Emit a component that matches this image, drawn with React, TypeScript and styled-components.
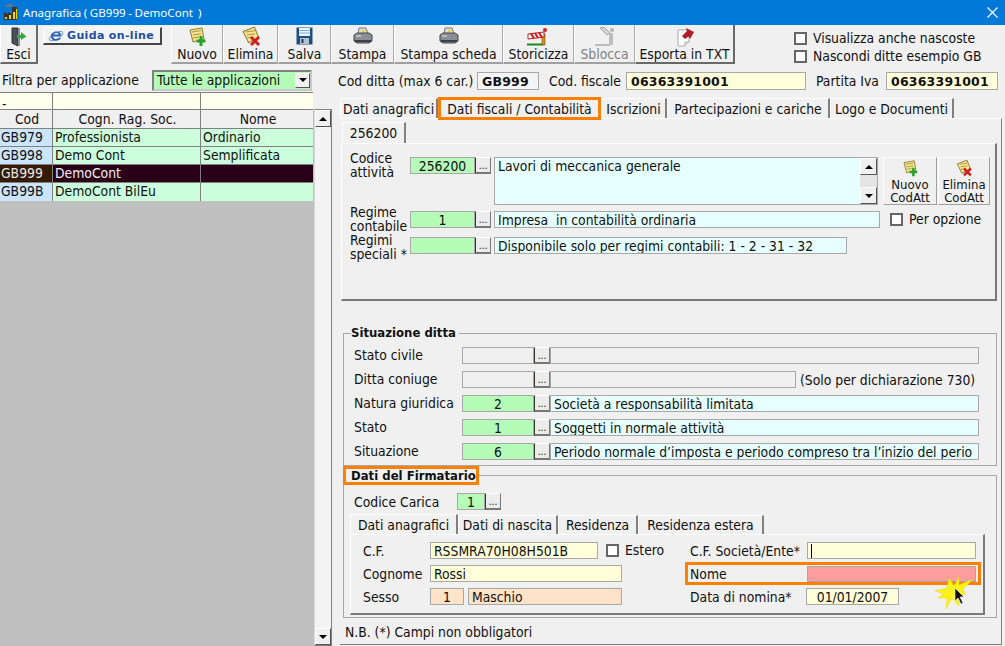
import { FC, ReactNode } from "react";
import styled, { createGlobalStyle } from "styled-components";

const Global = createGlobalStyle`
  html, body { margin: 0; padding: 0; background: #f0f0f0; }
  body { font-family: "DejaVu Sans Condensed", "DejaVu Sans", sans-serif; font-size: 13.8px; color: #111; }
  * { box-sizing: border-box; }
`;

const Page = styled.div`
  width: 1005px;
  height: 646px;
  display: flex;
  flex-direction: column;
  overflow: hidden;
  position: relative;
  background: #f0f0f0;
`;

const TitleBar = styled.div`
  height: 25px;
  flex: none;
  background: #0078d7;
  color: #fff;
  display: flex;
  align-items: center;
  padding: 0 7px 0 3px;
  gap: 4px;
  white-space: pre;
  font-family: "Noto Sans", sans-serif;
  font-size: 11.6px;
  word-spacing: -0.5px;
`;
const TitleText = styled.span`
  flex: 1;
`;

const TopBar = styled.div`
  height: 40px;
  flex: none;
  display: flex;
  align-items: flex-start;
`;

const ToolButton = styled.div<{ $w: number; $off?: boolean; $raised?: boolean }>`
  width: ${(p) => p.$w}px;
  height: 39px;
  flex: none;
  display: flex;
  flex-direction: column;
  align-items: center;
  justify-content: space-between;
  padding-top: 2px;
  color: ${(p) => (p.$off ? "#808080" : "#111")};
  background: #f0f0f0;
  border-right: 1px solid #a8a8a8;
  border-bottom: 2px solid #a0a0a0;
  border-left: 1px solid #fff;
  ${(p) => p.$raised && "border-right: 2px solid #696969; border-bottom: 2px solid #696969;"}
  line-height: 15px;
  white-space: nowrap;
`;

const HelpButton = styled.div`
  width: 119px;
  height: 18px;
  margin: 2px 9px 0 5px;
  flex: none;
  display: flex;
  align-items: center;
  gap: 3px;
  padding-left: 4px;
  background: #f4f4f4;
  border: 1px solid #fff;
  border-right: 2px solid #444;
  border-bottom: 2px solid #444;
  color: #1f4e9c;
  font-family: "DejaVu Sans", sans-serif;
  font-size: 11px;
  font-weight: 700;
  letter-spacing: 0.35px;
  white-space: nowrap;
`;

const TopChecks = styled.div`
  margin-left: 59px;
  padding-top: 7px;
  display: flex;
  flex-direction: column;
  gap: 5px;
`;

const CheckRow = styled.label<{ $ml?: number; $w?: number }>`
  display: flex;
  align-items: center;
  gap: 6px;
  line-height: 13px;
  white-space: nowrap;
  margin-left: ${(p) => p.$ml ?? 0}px;
  ${(p) => p.$w && `width: ${p.$w}px; flex: none;`}
`;

const CheckBox = styled.span`
  width: 13px;
  height: 13px;
  flex: none;
  display: block;
  background: #fff;
  border: 2px solid #666;
`;

const Main = styled.div`
  flex: 1;
  min-height: 0;
  display: flex;
`;

const LeftCol = styled.div`
  width: 333px;
  flex: none;
  display: flex;
  flex-direction: column;
`;

const FilterRow = styled.div`
  height: 27px;
  flex: none;
  display: flex;
  align-items: center;
  padding: 3px 0 0 2px;
  white-space: nowrap;
`;

const FilterLabel = styled.span`
  width: 150px;
`;

const Select = styled.div`
  width: 160px;
  height: 21px;
  display: flex;
  align-items: center;
  justify-content: space-between;
  padding-left: 3px;
  background: #b5fcb9;
  border: 2px solid #808080;
  border-bottom-color: #c8c8c8;
  border-right-color: #c8c8c8;
`;

const ArrowBox = styled.span<{ $w?: number; $h?: number }>`
  width: ${(p) => p.$w ?? 15}px;
  height: ${(p) => p.$h ?? 15}px;
  flex: none;
  display: flex;
  align-items: center;
  justify-content: center;
  background: #f0f0f0;
  border: 1px solid #fff;
  border-right-color: #555;
  border-bottom-color: #555;
`;

const Tri = styled.span<{ $up?: boolean }>`
  width: 0;
  height: 0;
  border-left: 4px solid transparent;
  border-right: 4px solid transparent;
  border-${(p) => (p.$up ? "bottom" : "top")}: 4px solid #000;
`;

const GridRow = styled.div<{ $h: number }>`
  width: 313px;
  height: ${(p) => p.$h}px;
  flex: none;
  display: grid;
  grid-template-columns: 52px 147px 112px;
  gap: 1px;
  background: #808080;
  padding: 1px 0 0;
  border-right: 1px solid #808080;
`;

const Cell = styled.div<{ $bg: string; $color?: string; $head?: boolean; $pad?: number }>`
  background: ${(p) => p.$bg};
  color: ${(p) => p.$color ?? "#111"};
  display: flex;
  align-items: center;
  justify-content: ${(p) => (p.$head ? "center" : "flex-start")};
  padding-left: ${(p) => p.$pad ?? 2}px;
  padding-bottom: ${(p) => (p.$head ? 0 : 2)}px;
  white-space: nowrap;
  overflow: hidden;
`;

const DashCell = styled(Cell)`
  align-items: flex-end;
  padding-bottom: 0;
  line-height: 10px;
  overflow: visible;
`;

const GridBody = styled.div`
  flex: 1;
  min-height: 0;
  display: flex;
`;

const GridArea = styled.div`
  width: 314px;
  flex: none;
  background: #c0c0c0;
`;

const Scrollbar = styled.div`
  width: 18px;
  flex: none;
  display: flex;
  flex-direction: column;
  justify-content: space-between;
  background: #f4f4f4;
  border: 1px solid #808080;
  border-left-color: #d8d8d8;
`;

const RightCol = styled.div`
  flex: 1;
  min-width: 0;
  display: flex;
  flex-direction: column;
`;

const InfoRow = styled.div`
  height: 18px;
  margin-top: 7px;
  padding-left: 5px;
  display: flex;
  align-items: center;
  white-space: nowrap;
`;

const InfoLabel = styled.span<{ $w: number; $pl?: number }>`
  width: ${(p) => p.$w}px;
  padding-left: ${(p) => p.$pl ?? 0}px;
  flex: none;
`;

const InfoValue = styled.span<{ $w: number; $bg: string }>`
  width: ${(p) => p.$w}px;
  height: 18px;
  flex: none;
  display: flex;
  align-items: center;
  padding-left: 4px;
  background: ${(p) => p.$bg};
  border: 1px solid #a8a8a8;
  font-family: "DejaVu Sans", sans-serif;
  font-size: 12.5px;
  font-weight: 700;
  letter-spacing: 0.2px;
`;

const TabStrip = styled.div<{ $ml: number; $mt: number; $h: number }>`
  display: flex;
  margin: ${(p) => p.$mt}px 0 0 ${(p) => p.$ml}px;
  height: ${(p) => p.$h}px;
  flex: none;
  align-items: flex-end;
`;

const Tab = styled.div<{ $w: number; $active?: boolean }>`
  width: ${(p) => p.$w}px;
  height: ${(p) => (p.$active ? "100%" : "calc(100% - 1px)")};
  flex: none;
  display: flex;
  align-items: center;
  justify-content: center;
  white-space: nowrap;
  background: #f0f0f0;
  border-top: 1px solid #fff;
  border-left: 1px solid #fff;
  border-right: 2px solid #808080;
`;

const MarkedTab = styled.div<{ $w: number }>`
  width: ${(p) => p.$w}px;
  height: 23px;
  margin-bottom: -2px;
  flex: none;
  position: relative;
  z-index: 1;
  display: flex;
  align-items: center;
  justify-content: center;
  white-space: nowrap;
  background: #f0f0f0;
  border: 3px solid #ff8000;
`;

const OuterPanel = styled.div`
  flex: 1;
  min-height: 0;
  margin: 0 3px 1px 7px;
  padding: 3px 4px 0 1px;
  border-top: 1px solid #fff;
  border-right: 1px solid #808080;
  border-bottom: 1px solid #808080;
  display: flex;
  flex-direction: column;
`;

const TabPanel = styled.div<{ $h: number }>`
  height: ${(p) => p.$h}px;
  flex: none;
  border-top: 1px solid #fff;
  border-left: 1px solid #fff;
  border-right: 2px solid #787878;
  border-bottom: 2px solid #787878;
  display: flex;
  flex-direction: column;
`;

const ActivityPanel = styled(TabPanel)`
  padding: 13px 0 0 8px;
  gap: 6px;
`;

const FormRow = styled.div<{ $h: number; $mt?: number }>`
  display: flex;
  align-items: center;
  height: ${(p) => p.$h}px;
  margin-top: ${(p) => p.$mt ?? 0}px;
  flex: none;
`;

const TopRow = styled(FormRow)`
  align-items: flex-start;
`;

const Label = styled.span<{ $w: number; $raise?: number; $ml?: number }>`
  width: ${(p) => p.$w}px;
  flex: none;
  line-height: 14px;
  margin-top: ${(p) => -(p.$raise ?? 0)}px;
  margin-left: ${(p) => p.$ml ?? 0}px;
  white-space: nowrap;
`;

const Note = styled.span`
  margin-left: 4px;
  white-space: nowrap;
`;

const Box = styled.div<{ $w: number; $bg?: string; $center?: boolean; $h?: number; $ml?: number }>`
  width: ${(p) => p.$w}px;
  height: ${(p) => p.$h ?? 17}px;
  flex: none;
  margin-left: ${(p) => p.$ml ?? 0}px;
  display: flex;
  align-items: center;
  justify-content: ${(p) => (p.$center ? "center" : "flex-start")};
  padding: 0 3px;
  background: ${(p) => p.$bg ?? "#f0f0f0"};
  border: 1px solid #a8a8a8;
  white-space: pre;
  overflow: hidden;
`;

const Caret = styled.span`
  width: 1px;
  height: 14px;
  background: #000;
`;

const Dots = styled.div`
  width: 16px;
  height: 17px;
  flex: none;
  display: flex;
  align-items: flex-end;
  justify-content: center;
  line-height: 12px;
  font-size: 10px;
  background: #ececec;
  border: 1px solid #fff;
  border-left: 1px solid #333;
  border-right-color: #777;
  border-bottom: 2px solid #777;
`;

const MemoBox = styled.div`
  width: 384px;
  height: 48px;
  flex: none;
  margin-left: 3px;
  display: flex;
  justify-content: space-between;
  padding-left: 3px;
  background: #e6ffff;
  border: 1px solid #a8a8a8;
`;

const MemoBar = styled.div`
  width: 17px;
  flex: none;
  display: flex;
  flex-direction: column;
  justify-content: space-between;
  background: #e4e4e4;
`;

const MiniButton = styled.div<{ $ml: number; $w: number }>`
  width: ${(p) => p.$w}px;
  height: 48px;
  margin-left: ${(p) => p.$ml}px;
  flex: none;
  display: flex;
  flex-direction: column;
  align-items: center;
  text-align: center;
  font-size: 13px;
  line-height: 13px;
  padding-top: 2px;
  border: 1px solid #fff;
  border-right-color: #a0a0a0;
  border-bottom-color: #a0a0a0;
  white-space: pre-line;
  svg { margin-bottom: 1px; }
`;

const GroupBox = styled.fieldset<{ $mt: number; $h: number }>`
  margin: ${(p) => p.$mt}px 0 0 2px;
  width: 654px;
  height: ${(p) => p.$h}px;
  flex: none;
  padding: 0 0 0 10px;
  border: 1px solid #a8a8a8;
  min-inline-size: 0;
`;

const GroupTitle = styled.legend<{ $mark?: boolean }>`
  margin-left: ${(p) => (p.$mark ? "-11px" : "-3px")};
  padding: ${(p) => (p.$mark ? "0 0 0 5px" : "0 3px 0 0")};
  font-size: 13px;
  font-weight: 700;
  line-height: ${(p) => (p.$mark ? "13px" : "16px")};
  ${(p) => p.$mark && "border: 3px solid #ff8000;"}
`;

const Stack = styled.div<{ $gap: number; $pt: number }>`
  display: flex;
  flex-direction: column;
  gap: ${(p) => p.$gap}px;
  padding-top: ${(p) => p.$pt}px;
`;

const SignerPanel = styled(TabPanel)`
  width: 635px;
  margin-left: -4px;
  padding: 7px 0 0 12px;
  gap: 6px;
`;

const Marked = styled.div`
  width: 296px;
  height: 23px;
  flex: none;
  margin: -3px 0 -3px 63px;
  display: flex;
  align-items: center;
  padding-left: 2px;
  border: 3px solid #ff8000;
`;

const Footnote = styled.div`
  margin: 6px 0 0 4px;
  line-height: 16px;
`;

const Overlay = styled.div`
  position: absolute;
  left: 935px;
  top: 576px;
  width: 40px;
  height: 36px;
`;

const DocIcon: FC<{ kind: "add" | "del"; s?: number }> = ({ kind, s = 20 }) => (
  <svg width={s} height={s} viewBox="0 0 20 20">
    <path d="M3 3 L15 1 L17 12 L6 15 Z" fill="#f6e590" stroke="#8a7a30" strokeWidth="1" transform={kind === "del" ? "rotate(-12 10 8)" : undefined} />
    <path d="M5 5 L14 3.6 M6 8 L14 6.8 M6 11 L12 10" stroke="#a89440" strokeWidth="1" />
    {kind === "add" ? (
      <path d="M14 9 V19 M9.5 14 H18.5" stroke="#2aa02a" strokeWidth="3" />
    ) : (
      <path d="M10 10 L18 18 M18 10 L10 18" stroke="#d02020" strokeWidth="3" />
    )}
  </svg>
);

const PrinterIcon = () => (
  <svg width="20" height="18" viewBox="0 0 20 18">
    <path d="M6 1 H13 L15 7 H5 Z" fill="#ddd" stroke="#777" />
    <path d="M9 3 h3 v2 h-3z" fill="#e8d050" />
    <path d="M1 8 L4 6 H16 L19 8 V14 L16 16 H4 L1 14 Z" fill="#8a8f96" stroke="#444" />
    <path d="M2 13 H18 V15 H2Z" fill="#3c4046" />
    <path d="M3 9 H8" stroke="#e4e4e4" />
  </svg>
);

const FloppyIcon = () => (
  <svg width="17" height="18" viewBox="0 0 17 18">
    <rect x="0.5" y="0.5" width="16" height="17" fill="#1d4f7e" />
    <rect x="3" y="1" width="11" height="8" fill="#e8f2fa" />
    <path d="M3 3.5 H14 M3 6 H14" stroke="#7fb2d8" />
    <rect x="4" y="11" width="9" height="6" fill="#b8c2cc" />
    <rect x="5.5" y="12" width="2" height="4" fill="#1d3a58" />
  </svg>
);

const ExitIcon = () => (
  <svg width="16" height="20" viewBox="0 0 16 20">
    <path d="M1 1 H7 V19 L1 16 Z" fill="#4a5058" stroke="#2c3036" />
    <path d="M7 1 H9 V19 H7Z" fill="#8a9098" />
    <path d="M6 8 H10 V5 L15.5 9.5 L10 13 V11 H6 Z" fill="#35a83a" />
  </svg>
);

const IeIcon = () => (
  <svg width="16" height="15" viewBox="0 0 16 15">
    <ellipse cx="8" cy="8" rx="7.5" ry="3" fill="none" stroke="#7ea6dc" transform="rotate(-30 8 8)" />
    <path d="M12.5 8.5 H5 C5 11 9 12 11.5 10 H13 C11 14 3 14 3 8 C3 3 11 2 13 6 C13 7 12.8 8 12.5 8.5 Z M5.2 6.6 H10.8 C10 4 6 4 5.2 6.6 Z" fill="#2b62b8" fillRule="evenodd" />
  </svg>
);

const BarrierIcon = () => (
  <svg width="24" height="19" viewBox="0 0 24 19">
    <path d="M0 17.5 H16" stroke="#1a8a1a" strokeWidth="2" />
    <rect x="15" y="7" width="3" height="11" fill="#d89020" stroke="#6a4a10" strokeWidth="0.6" />
    <path d="M1 7 L17 5 V10 L1 12 Z" fill="#fff" stroke="#c02020" />
    <path d="M4 6.6 L7 11.4 M8 6.1 L11 10.9 M12 5.6 L15 10.4" stroke="#d02020" strokeWidth="2" />
    <circle cx="18" cy="3" r="2" fill="#d02020" />
  </svg>
);

const GateIcon = () => (
  <svg width="20" height="19" viewBox="0 0 20 19">
    <path d="M0 18 H15" stroke="#bbb" strokeWidth="2" />
    <rect x="14" y="6" width="4" height="12" fill="#bdbdbd" />
    <path d="M5 1 L9 0 L15 6 L12 8 Z" fill="#d4d4d4" stroke="#a8a8a8" />
    <circle cx="17" cy="3" r="2" fill="#b4b4b4" />
  </svg>
);

const ExportIcon = () => (
  <svg width="20" height="20" viewBox="0 0 20 20">
    <path d="M3 3 H14 V15 L10 19 H3 Z" fill="#fff" stroke="#aaa" />
    <path d="M10 19 V15 H14" fill="#e4e4e4" stroke="#aaa" />
    <path d="M7 9 L12 4 L11 1 L19 5 L15 12 L13.5 9.5 L10 12 Z" fill="#b01c24" />
  </svg>
);

const AppIcon = () => (
  <svg width="16" height="17" viewBox="0 0 16 17">
    <path d="M1 16 V8 L5 10 V8 L9 10 V3 H14 V16 Z" fill="#3a3430" />
    <path d="M3 1.5 h7" stroke="#777" strokeWidth="2" />
    <path d="M2 13 h2 v2 h-2z M6 11 h2 v4 h-2z M10 8 h2 v7 h-2z M13 5 h1 v10 h-1z" fill="#f2d400" />
  </svg>
);

const Tool: FC<{ w: number; label: string; icon: ReactNode; off?: boolean; raised?: boolean }> = ({ w, label, icon, off, raised }) => (
  <ToolButton $w={w} $off={off} $raised={raised}>
    {icon}
    <span>{label}</span>
  </ToolButton>
);

const rows = [
  ["GB979", "Professionista", "Ordinario"],
  ["GB998", "Demo Cont", "Semplificata"],
  ["GB999", "DemoCont", ""],
  ["GB99B", "DemoCont BilEu", ""],
];

const situazione = [
  { label: "Stato civile", code: "", text: "", w: 429, on: false },
  { label: "Ditta coniuge", code: "", text: "", w: 246, on: false, note: "(Solo per dichiarazione 730)" },
  { label: "Natura giuridica", code: "2", text: "Società a responsabilità limitata", w: 429, on: true },
  { label: "Stato", code: "1", text: "Soggetti in normale attività", w: 429, on: true },
  { label: "Situazione", code: "6", text: "Periodo normale d’imposta e periodo compreso tra l’inizio del perio", w: 429, on: true },
];

const GREEN = "#b5fcb9";
const CYAN = "#e6ffff";
const CREAM = "#ffffd9";
const PEACH = "#ffe3c8";

export default function App() {
  return (
    <Page>
      <Global />
      <TitleBar>
        <AppIcon />
        <TitleText>Anagrafica ( GB999 - DemoCont  )</TitleText>
        <svg width="11" height="11" viewBox="0 0 11 11">
          <path d="M0.5 0.5 L10.5 10.5 M10.5 0.5 L0.5 10.5" stroke="#fff" strokeWidth="1.2" />
        </svg>
      </TitleBar>

      <TopBar>
        <Tool w={38} label="Esci" icon={<ExitIcon />} raised />
        <HelpButton>
          <IeIcon />
          Guida on-line
        </HelpButton>
        <Tool w={52} label="Nuovo" icon={<DocIcon kind="add" />} />
        <Tool w={55} label="Elimina" icon={<DocIcon kind="del" />} />
        <Tool w={53} label="Salva" icon={<FloppyIcon />} />
        <Tool w={63} label="Stampa" icon={<PrinterIcon />} />
        <Tool w={109} label="Stampa scheda" icon={<PrinterIcon />} />
        <Tool w={71} label="Storicizza" icon={<BarrierIcon />} />
        <Tool w={61} label="Sblocca" icon={<GateIcon />} off />
        <Tool w={100} label="Esporta in TXT" icon={<ExportIcon />} raised />
        <TopChecks>
          <CheckRow>
            <CheckBox />
            Visualizza anche nascoste
          </CheckRow>
          <CheckRow>
            <CheckBox />
            Nascondi ditte esempio GB
          </CheckRow>
        </TopChecks>
      </TopBar>

      <Main>
        <LeftCol>
          <FilterRow>
            <FilterLabel>Filtra per applicazione</FilterLabel>
            <Select>
              Tutte le applicazioni
              <ArrowBox>
                <Tri />
              </ArrowBox>
            </Select>
          </FilterRow>
          <GridRow $h={17}>
            <DashCell $bg="#ffffee">-</DashCell>
            <Cell $bg="#ffffee" />
            <Cell $bg="#ffffee" />
          </GridRow>
          <GridBody>
            <GridArea>
              <GridRow $h={19}>
                <Cell $bg="#f0f0f0" $head>Cod</Cell>
                <Cell $bg="#f0f0f0" $head>Cogn. Rag. Soc.</Cell>
                <Cell $bg="#f0f0f0" $head>Nome</Cell>
              </GridRow>
              {rows.map((r, i) => {
                const sel = r[0] === "GB999";
                return (
                  <GridRow $h={i === 3 ? 19 : 18} key={r[0]}>
                    <Cell $bg={sel ? "#331a00" : "#cce5ff"} $color={sel ? "#e8e8e8" : "#111"} $pad={1}>{r[0]}</Cell>
                    <Cell $bg={sel ? "#2a0018" : "#ccffdb"} $color={sel ? "#f0f0f0" : "#111"}>{r[1]}</Cell>
                    <Cell $bg={sel ? "#2a0018" : "#ccffdb"}>{r[2]}</Cell>
                  </GridRow>
                );
              })}
            </GridArea>
            <Scrollbar>
              <ArrowBox $w={16} $h={17}>
                <Tri $up />
              </ArrowBox>
              <ArrowBox $w={16} $h={17}>
                <Tri />
              </ArrowBox>
            </Scrollbar>
          </GridBody>
        </LeftCol>

        <RightCol>
          <InfoRow>
            <InfoLabel $w={139}>Cod ditta (max 6 car.)</InfoLabel>
            <InfoValue $w={62} $bg="#f4f4f4">GB999</InfoValue>
            <InfoLabel $w={87} $pl={10}>Cod. fiscale</InfoLabel>
            <InfoValue $w={180} $bg={CREAM}>06363391001</InfoValue>
            <InfoLabel $w={80} $pl={10}>Partita Iva</InfoLabel>
            <InfoValue $w={112} $bg={CREAM}>06363391001</InfoValue>
          </InfoRow>
          <TabStrip $ml={7} $mt={7} $h={21}>
            <Tab $w={98}>Dati anagrafici</Tab>
            <MarkedTab $w={163}>Dati fiscali / Contabilità</MarkedTab>
            <Tab $w={66}>Iscrizioni</Tab>
            <Tab $w={163}>Partecipazioni e cariche</Tab>
            <Tab $w={124}>Logo e Documenti</Tab>
          </TabStrip>
          <OuterPanel>
            <TabStrip $ml={1} $mt={0} $h={21}>
              <Tab $w={64} $active>256200</Tab>
            </TabStrip>
            <ActivityPanel $h={158}>
              <TopRow $h={48}>
                <Label $w={60} $raise={6}>
                  Codice
                  <br />
                  attività
                </Label>
                <Box $w={65} $bg={GREEN} $center>256200</Box>
                <Dots>...</Dots>
                <MemoBox>
                  <span>Lavori di meccanica generale</span>
                  <MemoBar>
                    <ArrowBox $w={17} $h={17}>
                      <Tri $up />
                    </ArrowBox>
                    <ArrowBox $w={17} $h={17}>
                      <Tri />
                    </ArrowBox>
                  </MemoBar>
                </MemoBox>
                <MiniButton $ml={5} $w={54}>
                  <DocIcon kind="add" s={18} />
                  {"Nuovo\nCodAtt"}
                </MiniButton>
                <MiniButton $ml={1} $w={52}>
                  <DocIcon kind="del" s={18} />
                  {"Elimina\nCodAtt"}
                </MiniButton>
              </TopRow>
              <FormRow $h={17}>
                <Label $w={60} $raise={2}>
                  Regime
                  <br />
                  contabile
                </Label>
                <Box $w={65} $bg={GREEN} $center>1</Box>
                <Dots>...</Dots>
                <Box $w={386} $ml={3} $bg={CYAN}>Impresa  in contabilità ordinaria</Box>
                <CheckRow $ml={10}>
                  <CheckBox />
                  Per opzione
                </CheckRow>
              </FormRow>
              <FormRow $h={17} $mt={3}>
                <Label $w={60} $raise={-2}>
                  Regimi
                  <br />
                  speciali *
                </Label>
                <Box $w={65} $bg={GREEN} $center />
                <Dots>...</Dots>
                <Box $w={353} $ml={3} $bg={CYAN}>Disponibile solo per regimi contabili: 1 - 2 - 31 - 32</Box>
              </FormRow>
            </ActivityPanel>

            <GroupBox $mt={24} $h={141}>
              <GroupTitle>Situazione ditta</GroupTitle>
              <Stack $gap={7} $pt={6}>
                {situazione.map((s) => (
                  <FormRow $h={17} key={s.label}>
                    <Label $w={108} $raise={2}>{s.label}</Label>
                    <Box $w={72} $bg={s.on ? GREEN : undefined} $center>{s.code}</Box>
                    <Dots>...</Dots>
                    <Box $w={s.w} $bg={s.on ? CYAN : undefined}>{s.text}</Box>
                    {s.note && <Note>{s.note}</Note>}
                  </FormRow>
                ))}
              </Stack>
            </GroupBox>

            <GroupBox $mt={0} $h={152}>
              <GroupTitle $mark>Dati del Firmatario</GroupTitle>
              <FormRow $h={17} $mt={8}>
                <Label $w={103}>Codice Carica</Label>
                <Box $w={28} $bg={GREEN} $center>1</Box>
                <Dots>...</Dots>
              </FormRow>
              <TabStrip $ml={-4} $mt={4} $h={20}>
                <Tab $w={108} $active>Dati anagrafici</Tab>
                <Tab $w={100}>Dati di nascita</Tab>
                <Tab $w={80}>Residenza</Tab>
                <Tab $w={126}>Residenza estera</Tab>
              </TabStrip>
              <SignerPanel $h={81}>
                <FormRow $h={17}>
                  <Label $w={67}>C.F.</Label>
                  <Box $w={168} $bg={CREAM}>RSSMRA70H08H501B</Box>
                  <CheckRow $ml={8} $w={84}>
                    <CheckBox />
                    Estero
                  </CheckRow>
                  <Label $w={117}>C.F. Società/Ente*</Label>
                  <Box $w={169} $bg={CREAM}><Caret /></Box>
                </FormRow>
                <FormRow $h={17}>
                  <Label $w={67}>Cognome</Label>
                  <Box $w={192} $bg={CREAM}>Rossi</Box>
                  <Marked>
                    <Label $w={117}>Nome</Label>
                    <Box $w={169} $h={16} $bg="#ff9c9c" />
                  </Marked>
                </FormRow>
                <FormRow $h={17}>
                  <Label $w={67}>Sesso</Label>
                  <Box $w={34} $bg={PEACH} $center>1</Box>
                  <Box $w={154} $ml={4} $bg={PEACH}>Maschio</Box>
                  <Label $w={116} $ml={68}>Data di nomina*</Label>
                  <Box $w={93} $bg={CREAM} $center>01/01/2007</Box>
                </FormRow>
              </SignerPanel>
            </GroupBox>
            <Footnote>N.B. (*) Campi non obbligatori</Footnote>
          </OuterPanel>
        </RightCol>
      </Main>

      <Overlay>
        <svg width="40" height="36" viewBox="0 0 40 36">
          <polygon
            points="0,15 12,12 14,2 19,10 24,1 24,9 38,3 28,13 30,18 23,20 24,30 17,22 11,33 12,22 3,22 9,18"
            fill="#fff21a"
            stroke="#e8d800"
            strokeWidth="0.5"
          />
          <path d="M20 12 L20 25 L23 22 L26 28 L28 27 L25 21 L29 21 Z" fill="#111" stroke="#fff" strokeWidth="0.6" />
        </svg>
      </Overlay>
    </Page>
  );
}
